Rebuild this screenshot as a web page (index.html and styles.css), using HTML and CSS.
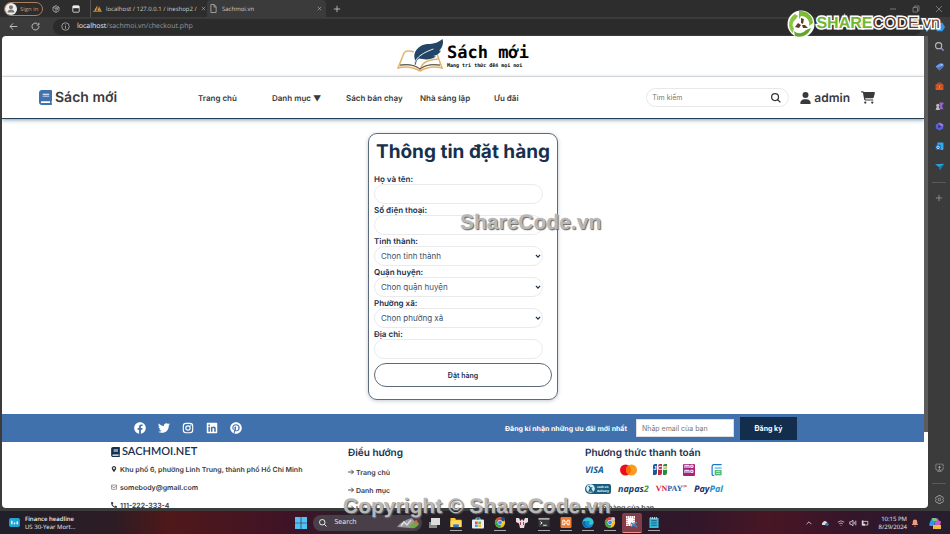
FILE: index.html
```html
<!DOCTYPE html>
<html lang="vi">
<head>
<meta charset="utf-8">
<title>Sachmoi.vn</title>
<link rel="stylesheet" href="styles.css">
</head>
<body>
<svg class="defs" aria-hidden="true">
  <symbol id="book" viewBox="0 0 448 512"><path d="M448 360V24c0-13.3-10.7-24-24-24H96C43 0 0 43 0 96v320c0 53 43 96 96 96h328c13.3 0 24-10.7 24-24v-16c0-7.5-3.5-14.3-8.9-18.7-4.2-15.4-4.2-59.3 0-74.7 5.4-4.3 8.9-11.1 8.9-18.6zM128 134c0-3.300 2.700-6 6-6h212c3.300 0 6 2.700 6 6v20c0 3.300-2.700 6-6 6H134c-3.300 0-6-2.700-6-6v-20zm0 64c0-3.300 2.700-6 6-6h212c3.300 0 6 2.700 6 6v20c0 3.300-2.700 6-6 6H134c-3.300 0-6-2.700-6-6v-20zm253.400 250H96c-17.700 0-32-14.300-32-32 0-17.600 14.400-32 32-32h285.400c-1.900 17.100-1.900 46.900 0 64z"/></symbol>
  <symbol id="arrow" viewBox="0 0 12 12"><path d="M0 6h11M6.500 1.500L11 6l-4.500 4.500" fill="none" stroke="currentColor" stroke-width="1.800"/></symbol>
  <symbol id="chevron" viewBox="0 0 10 10"><path d="M1.500 3l3.500 3.800L8.500 3" fill="none" stroke="currentColor" stroke-width="2"/></symbol>
  <symbol id="cross" viewBox="0 0 10 10"><path d="M1.500 1.500l7 7m0-7l-7 7" fill="none" stroke="currentColor"/></symbol>
  <symbol id="lens" viewBox="0 0 16 16"><path d="M10.500 10.500L15 15M12 6.500a5.500 5.500 0 1 1-11 0a5.500 5.500 0 0 1 11 0z" fill="none" stroke="currentColor" stroke-width="2"/></symbol>
  <symbol id="plus" viewBox="0 0 10 10"><path d="M5 1v8M1 5h8" fill="none" stroke="currentColor"/></symbol>
  <symbol id="chrome" viewBox="0 0 16 16"><circle cx="8" cy="8" r="7.500" fill="#fbc116"/><path d="M8 8L1.500 4.200A7.500 7.500 0 0 1 14.500 4.200z" fill="#ea4335"/><path d="M8 8L1.500 4.200A7.500 7.500 0 0 0 8 15.500l2-4z" fill="#34a853"/><circle cx="8" cy="8" r="3.600" fill="#fff"/><circle cx="8" cy="8" r="2.800" fill="#4285f4"/></symbol>
</svg>

<div class="tabs">
  <button class="signin"><svg viewBox="0 0 12 12"><circle cx="6" cy="6" r="6" fill="#eee"/><circle cx="6" cy="4.300" r="2" fill="#777"/><path d="M2.500 9.500c0-4 7-4 7 0z" fill="#777"/></svg>Sign in</button>
  <svg class="ic8" viewBox="0 0 10 10" fill="none" stroke="#aaa"><path d="M5 .7l3.800 2.100v4.300L5 9.300 1.200 7.100V2.800zM1.200 2.800L5 5l3.800-2.200M5 5v4.300M3 1.800L7 4v2"/></svg>
  <svg class="ic8 square" viewBox="0 0 10 10"><rect x="1" y="1" width="8" height="8" rx="1" fill="none" stroke="#eee"/><path d="M1 1h8v3H1z" fill="#eee"/></svg>
  <div class="tab">
    <svg class="ic9" viewBox="0 0 12 10"><path d="M5.500 1L4.500 8H1.500zM6.300 1v7h2.200zM8.300 2v6h2.700z" fill="#f2a33c"/><path d="M0 9h12" stroke="#8d90b5"/></svg>
    <span>localhost / 127.0.0.1 / ineshop2 /</span><svg class="x"><use href="#cross"/></svg>
  </div>
  <div class="tab active">
    <svg class="ic9" viewBox="0 0 10 12" fill="none" stroke="#bbb"><path d="M1.500.7h4.500l2.500 3v7.600h-7zM5.800.7v3.300h2.700"/></svg>
    <span>Sachmoi.vn</span><svg class="x"><use href="#cross"/></svg>
  </div>
  <svg class="newtab"><use href="#plus"/></svg>
  <div class="winbtns">
    <svg viewBox="0 0 10 10" stroke="#777"><path d="M2 5h6"/></svg>
    <svg viewBox="0 0 10 10" fill="none" stroke="#777"><path d="M2 3.500h4.500V8H2zM3.500 3.500V2H8v4.500H6.500"/></svg>
    <svg viewBox="0 0 10 10" stroke="#777"><path d="M2 2l6 6m0-6L2 8"/></svg>
  </div>
</div>

<div class="toolbar">
  <svg class="ic9" viewBox="0 0 12 12" fill="none" stroke="#ccc" stroke-width="1.200"><path d="M11 6H1.500M5.500 1.800L1.300 6l4.200 4.200"/></svg>
  <svg class="ic9" viewBox="0 0 12 12" fill="none" stroke="#ccc" stroke-width="1.200"><path d="M10.500 5.500A4.600 4.600 0 1 1 8.500 2.200M10.500 1v3H7.500"/></svg>
  <div class="address">
    <svg class="ic9" viewBox="0 0 12 12" fill="none" stroke="#bbb"><circle cx="6" cy="6" r="5"/><path d="M6 5.200v3.600M6 3.200v1.100"/></svg>
    <span><b>localhost</b>/sachmoi.vn/checkout.php</span>
    <span class="reader">A⁾</span>
  </div>
  <svg class="edgepilot" viewBox="0 0 12 12"><path d="M3 1h6l3 5-3 5H2z" fill="#2b9be8"/></svg>
</div>

<div class="middle">
  <div class="page">
    <div class="banner">
      <svg class="bookart" viewBox="0 0 46 34">
        <g fill="none" stroke="#e3b36b"><path d="M17 13C12 11 8 12 7 14L1 29c8-2 15-1 22 3 7-4 14-5 22-3L40 15" stroke-width="1.500"/><path d="M3 27c8-2 15-1 20 4 5-5 12-6 20-4"/><path d="M23 31c2-7 6-10 18-11" stroke-width="1.500"/></g>
        <path d="M3 26c9-1 15 0 20 4 5-4 11-5 20-4" fill="none" stroke="#444"/>
        <path d="M18 21c-3-8 4-15 12-16 7 0 12-2 15.500-5C47 5 45 9 42 12l2-.5c-2 4-5 5-8 5.500l3 .5c-6 4-12 3-17 2-2 1-3 3-3 6h-1.500z" fill="#234566"/>
        <path d="M17.500 25c1-7 10-12 19-15" fill="none" stroke="#fff" stroke-width=".9"/>
      </svg>
      <div class="wordmark"><strong>Sách mới</strong><small>Mang tri thức đến mọi nơi</small></div>
    </div>

    <header class="header">
      <a class="brand" href="#"><svg><use href="#book"/></svg>Sách mới</a>
      <nav class="nav"><a href="#">Trang chủ</a><a href="#">Danh mục ▼</a><a href="#">Sách bán chạy</a><a href="#">Nhà sáng lập</a><a href="#">Ưu đãi</a></nav>
      <form class="search"><input type="text" placeholder="Tìm kiếm" aria-label="Tìm kiếm"><button type="button" aria-label="Tìm kiếm"><svg><use href="#lens"/></svg></button></form>
      <a class="user" href="#"><svg viewBox="0 0 448 512"><path d="M224 256A128 128 0 1 0 224 0a128 128 0 1 0 0 256zm-45.700 48C79.800 304 0 383.800 0 482.300C0 498.700 13.300 512 29.700 512H418.300c16.400 0 29.700-13.300 29.700-29.700C448 383.800 368.200 304 269.700 304H178.300z"/></svg>admin</a>
      <a class="cart" href="#" aria-label="Giỏ hàng"><svg viewBox="0 0 576 512"><path d="M0 24C0 10.700 10.700 0 24 0H69.500c22 0 41.500 12.800 50.600 32h411c26.300 0 45.500 25 38.600 50.400l-41 152.300c-8.500 31.400-37 53.300-69.500 53.300H170.700l5.400 28.500c2.200 11.300 12.100 19.500 23.600 19.500H488c13.300 0 24 10.700 24 24s-10.700 24-24 24H199.700c-34.600 0-64.300-24.600-70.700-58.500L77.400 54.500c-.7-3.800-4-6.500-7.900-6.500H24C10.700 48 0 37.300 0 24zM128 464a48 48 0 1 1 96 0 48 48 0 1 1 -96 0zm336-48a48 48 0 1 1 0 96 48 48 0 1 1 0-96z"/></svg></a>
    </header>

    <main class="main">
      <form class="card">
        <h1>Thông tin đặt hàng</h1>
        <label for="name">Họ và tên:</label>
        <input id="name" type="text">
        <label for="phone">Số điện thoại:</label>
        <input id="phone" type="text">
        <label for="city">Tỉnh thành:</label>
        <div class="pick"><select id="city"><option>Chọn tỉnh thành</option></select><svg><use href="#chevron"/></svg></div>
        <label for="district">Quận huyện:</label>
        <div class="pick"><select id="district"><option>Chọn quận huyện</option></select><svg><use href="#chevron"/></svg></div>
        <label for="ward">Phường xã:</label>
        <div class="pick"><select id="ward"><option>Chọn phường xã</option></select><svg><use href="#chevron"/></svg></div>
        <label for="street">Địa chỉ:</label>
        <input id="street" type="text">
        <button type="button">Đặt hàng</button>
      </form>
    </main>

    <footer>
      <div class="strip">
        <div class="social">
          <svg viewBox="0 0 512 512"><path d="M504 256C504 119 393 8 256 8S8 119 8 256c0 123.780 90.690 226.380 209.250 245V327.690h-63V256h63v-54.640c0-62.150 37-96.480 93.670-96.480 27.140 0 55.520 4.840 55.520 4.840v61h-31.280c-30.800 0-40.410 19.120-40.410 38.730V256h68.780l-11 71.690h-57.780V501C413.310 482.380 504 379.780 504 256z"/></svg>
          <svg viewBox="0 0 512 512"><path d="M459.370 151.716c.325 4.548.325 9.097.325 13.645 0 138.720-105.583 298.558-298.558 298.558-59.452 0-114.680-17.219-161.137-47.106 8.447.974 16.568 1.299 25.340 1.299 49.055 0 94.213-16.568 130.274-44.832-46.132-.975-84.792-31.188-98.112-72.772 6.498.974 12.995 1.624 19.818 1.624 9.421 0 18.843-1.300 27.614-3.573-48.081-9.747-84.143-51.980-84.143-102.985v-1.299c13.969 7.797 30.214 12.670 47.431 13.319-28.264-18.843-46.781-51.005-46.781-87.391 0-19.492 5.197-37.360 14.294-52.954 51.655 63.675 129.300 105.258 216.365 109.807-1.624-7.797-2.599-15.918-2.599-24.040 0-57.828 46.782-104.934 104.934-104.934 30.213 0 57.502 12.670 76.670 33.137 23.715-4.548 46.456-13.320 66.599-25.340-7.798 24.366-24.366 44.833-46.132 57.827 21.117-2.273 41.584-8.122 60.426-16.243-14.292 20.791-32.161 39.308-52.628 54.253z"/></svg>
          <svg viewBox="0 0 16 16"><g fill="none" stroke="#fff" stroke-width="1.500"><rect x="1.750" y="1.750" width="12.500" height="12.500" rx="3.500"/><circle cx="8" cy="8" r="2.900"/></g><circle cx="11.700" cy="4.300" r=".9"/></svg>
          <svg viewBox="-32 0 512 512"><path d="M416 32H31.900C14.300 32 0 46.500 0 64.300v383.400C0 465.500 14.300 480 31.900 480H416c17.600 0 32-14.500 32-32.300V64.300c0-17.800-14.400-32.300-32-32.300zM135.400 416H69V202.200h66.500V416zm-33.200-243c-21.300 0-38.500-17.300-38.500-38.500S80.900 96 102.200 96c21.200 0 38.500 17.300 38.500 38.500 0 21.300-17.200 38.500-38.500 38.500zm282.100 243h-66.400V312c0-24.800-.5-56.700-34.500-56.700-34.600 0-39.900 27-39.900 54.900V416h-66.400V202.200h63.700v29.200h.9c8.900-16.800 30.600-34.500 62.900-34.500 67.200 0 79.700 44.300 79.700 101.900V416z"/></svg>
          <svg viewBox="-8 0 512 512"><path d="M496 256c0 137-111 248-248 248-25.600 0-50.200-3.900-73.400-11.100 10.100-16.500 25.200-43.500 30.800-65 3-11.600 15.400-59 15.400-59 8.100 15.400 31.700 28.500 56.800 28.500 74.800 0 128.700-68.800 128.700-154.300 0-81.900-66.900-143.200-152.900-143.200-107 0-163.900 71.800-163.900 150.100 0 36.400 19.400 81.700 50.300 96.100 4.700 2.200 7.200 1.200 8.300-3.300.8-3.400 5-20.300 6.900-28.100.6-2.500.3-4.700-1.700-7.100-10.100-12.500-18.300-35.300-18.300-56.600 0-54.700 41.400-107.600 112-107.600 60.900 0 103.600 41.500 103.600 100.900 0 67.100-33.900 113.600-78 113.600-24.300 0-42.600-20.100-36.700-44.800 7-29.500 20.500-61.300 20.500-82.600 0-19-10.200-34.900-31.400-34.900-24.900 0-44.900 25.700-44.900 60.200 0 22 7.400 36.800 7.400 36.800s-24.500 103.800-29 123.200c-5 21.400-3 51.600-.9 71.200C65.400 450.900 0 361.100 0 256 0 119 111 8 248 8s248 111 248 248z"/></svg>
        </div>
        <form class="subscribe">
          <label for="email">Đăng kí nhận những ưu đãi mới nhất</label>
          <input id="email" type="email" placeholder="Nhập email của bạn">
          <button type="button">Đăng ký</button>
        </form>
      </div>
      <div class="columns">
        <section>
          <h2 class="site"><svg><use href="#book"/></svg>SACHMOI.NET</h2>
          <ul>
            <li><svg viewBox="-64 0 512 512"><path d="M172.268 501.670C26.970 291.031 0 269.413 0 192 0 85.961 85.961 0 192 0s192 85.961 192 192c0 77.413-26.970 99.031-172.268 309.670-9.535 13.774-29.930 13.773-39.464 0zM192 272c44.183 0 80-35.817 80-80s-35.817-80-80-80-80 35.817-80 80 35.817 80 80 80z"/></svg>Khu phố 6, phường Linh Trung, thành phố Hồ Chí Minh</li>
            <li><svg viewBox="0 0 12 12" fill="none" stroke="#333"><rect x=".8" y="2" width="10.400" height="8.500" rx="1"/><path d="M1 4l5 3.500L11 4"/></svg>somebody@gmail.com</li>
            <li><svg viewBox="0 0 512 512"><path transform="translate(512 0) scale(-1 1)" d="M493.400 24.600l-104-24c-11.300-2.600-22.900 3.300-27.500 13.900l-48 112c-4.200 9.800-1.400 21.300 6.900 28l60.600 49.600c-36 76.700-98.900 140.500-177.200 177.200l-49.600-60.600c-6.800-8.300-18.200-11.100-28-6.900l-112 48C3.900 366.500-2 378.100.6 389.400l24 104C27.100 504.200 36.700 512 48 512c256.100 0 464-207.500 464-464 0-11.200-7.700-20.900-18.600-23.400z"/></svg>111-222-333-4</li>
          </ul>
        </section>
        <section>
          <h2>Điều hướng</h2>
          <ul class="links">
            <li><svg><use href="#arrow"/></svg><a href="#">Trang chủ</a></li>
            <li><svg><use href="#arrow"/></svg><a href="#">Danh mục</a></li>
            <li><svg><use href="#arrow"/></svg><a href="#">Ưu đãi</a></li>
          </ul>
        </section>
        <section>
          <h2>Phương thức thanh toán</h2>
          <div class="pays">
            <span class="visa">VISA</span>
            <svg class="mc" viewBox="0 0 17 12"><circle cx="5.500" cy="6" r="5.500" fill="#e8101c"/><circle cx="11.500" cy="6" r="5.500" fill="#f79e1b"/><path d="M8.500 1.400a5.500 5.500 0 0 1 0 9.200a5.500 5.500 0 0 1 0-9.200z" fill="#ff6a0e"/></svg>
            <span class="jcb"><i>J</i><i>C</i><i>B</i></span>
            <span class="momo">mo<br>mo</span>
            <svg class="zalo" viewBox="0 0 12 13"><path d="M3 12.500H2A1.500 1.500 0 0 1 .7 11V2.500A2 2 0 0 1 2.700.7H11" fill="none" stroke="#1478cf" stroke-width="1.300"/><path d="M3.500 3.500H11v1.800H3.500z" fill="#7cc3e8"/><path d="M3.500 6.500H11v5.800H3.500z" fill="#51b878"/><path d="M5 8h4.500M5 10.200h4.500" stroke="#c8f0c8"/></svg>
          </div>
          <div class="pays">
            <span class="cod"><svg viewBox="0 0 10 10"><circle cx="5" cy="5" r="4.800" fill="#d5eef5"/><path d="M3 2l2 2.500L3.500 8H7L5 5l2-1" fill="none" stroke="#135d7e" stroke-width="1.300"/></svg><b>cash on<br>delivery</b></span>
            <span class="napas">napas<i>2</i></span>
            <span class="vnpay"><i>VN</i>PAY<sup>QR</sup></span>
            <span class="paypal">Pay<i>Pal</i></span>
          </div>
          <ul class="links"><li><svg><use href="#arrow"/></svg><a href="#">Đơn hàng của bạn</a></li></ul>
        </section>
      </div>
    </footer>
  </div>
  <div class="scroll"><div class="thumb"></div></div>
  <aside class="side">
    <svg viewBox="0 0 16 16"><g color="#bbb"><use href="#lens"/></g><path d="M11 11l4 4" stroke="#a070d8" stroke-width="2.500"/></svg>
    <svg viewBox="0 0 16 16"><path d="M1 8l8-6 6 1 0 5-7 7z" fill="#6c9cea"/><path d="M3 10l5 5 7-7v-2z" fill="#4c72c4"/><circle cx="12" cy="5" r="1" fill="#fff"/></svg>
    <svg viewBox="0 0 16 16"><path d="M5 4V2h6v2" fill="none" stroke="#e06030" stroke-width="1.500"/><rect x="1" y="4" width="14" height="10" rx="1.500" fill="#df5b25"/><path d="M1 8.500h14" stroke="#8b3010"/><path d="M7 7.500h2v2H7z" fill="#ffc090"/></svg>
    <svg viewBox="0 0 16 16"><circle cx="5" cy="6" r="3" fill="#bbb"/><path d="M1 14l2-5h4l2 5z" fill="#bbb"/><path d="M8 1h7v3l-2 1v4l2 4H9V5L8 4z" fill="#9a65d0"/></svg>
    <svg viewBox="0 0 16 16"><path d="M8 1l6.500 3.500v7L8 15l-6.500-3.500v-7z" fill="#5b60d8"/><path d="M8 1l6.500 3.500v4L8 5z" fill="#a078e8"/><path d="M6 5l5 3-5 3z" fill="#302f61"/></svg>
    <svg viewBox="0 0 16 16"><rect x="4" y="1" width="11" height="13" rx="1.500" fill="#33a9e8"/><rect x="1" y="5" width="9" height="9" rx="1" fill="#0c66b8"/><circle cx="5.500" cy="9.500" r="2.200" fill="none" stroke="#fff" stroke-width="1.500"/></svg>
    <svg viewBox="0 0 16 16"><path d="M0 4l16-1-7 11-2-5z" fill="#27a5df"/><path d="M7 9l9-6-7 11z" fill="#1476ad"/></svg>
    <hr>
    <svg class="muted"><use href="#plus"/></svg>
    <span class="push"></span>
    <svg viewBox="0 0 16 16" fill="none" stroke="#aaa" stroke-width="1.500"><path d="M4 12H1.500V2h13v10H12" stroke-dasharray="2 1"/><path d="M8 5v5M5.500 7.500h5M4.500 14.500L8 11l3.500 3.500z"/></svg>
    <hr>
    <svg viewBox="0 0 16 16" fill="none" stroke="#aaa" stroke-width="1.500"><path d="M6 1h4l1 2.200 2.500 0 1.800 3.300L13.800 8l1.500 2-1.800 3.200-2.500-.2L10 15H6l-1-2-2.500.2L.7 10l1.500-2L.7 6l1.800-3 2.500.2z"/><circle cx="8" cy="8" r="2.300"/></svg>
  </aside>
</div>

<div class="taskbar">
  <div class="news"><svg viewBox="0 0 12 10"><rect width="12" height="10" rx="2" fill="#22a6d4"/><path d="M3 3v4M6 5v2M9 4v3" stroke="#fff" stroke-width="1.500"/></svg><p><b>Finance headline</b><br>US 30-Year Mort...</p></div>
  <div class="apps">
    <svg viewBox="0 0 12 12" fill="#4fc3f7"><path d="M0 0h5.700v5.700H0zM6.300 0H12v5.700H6.300zM0 6.300h5.700V12H0zM6.300 6.300H12V12H6.300z"/></svg>
    <div class="find"><svg class="ic9"><use href="#lens"/></svg><span>Search</span><svg class="dish" viewBox="0 0 24 12"><path d="M1 10c4-5 8-7 15-9l3 4-4 6z" fill="#9a9aa0"/><path d="M5 9l3-4 3 3 4-5" fill="none" stroke="#ddd" stroke-width="1.500"/><path d="M14 8c3-3 6-3 9-2-1 4-5 6-9 5z" fill="#6cab45"/><circle cx="20" cy="5" r="1.800" fill="#e0663d"/></svg></div>
    <svg viewBox="0 0 12 12"><rect y="5" x="1" width="8" height="6" fill="#888"/><rect x="3" y="1" width="9" height="7" fill="#ddd"/></svg>
    <svg class="open" viewBox="0 0 12 12"><path d="M0 1h5l1 2h6v8H0z" fill="#fcc738"/><path d="M0 4h12v7H0z" fill="#ffda63"/><path d="M3 8h6v3H3z" fill="#3577c4"/></svg>
    <svg viewBox="0 0 12 12"><path d="M4 3V1h4v2" fill="none" stroke="#70c5ec"/><rect y="2.500" width="12" height="9" rx="1" fill="#e8eef2"/><path d="M3 4.500h2.700v2.500H3z" fill="#ef5332"/><path d="M6.300 4.500H9v2.500H6.300z" fill="#7eb93e"/><path d="M3 7.500h2.700V10H3z" fill="#34a6e6"/><path d="M6.300 7.500H9V10H6.300z" fill="#f5b82c"/></svg>
    <svg class="open" viewBox="0 0 16 16"><use href="#chrome"/><circle cx="12.500" cy="3" r="3" fill="#1c4d80"/></svg>
    <svg viewBox="0 0 12 12"><path d="M0 1h3l1.500 3L6 2l1.500 2L9 1h3v4L9 6.500 8 11H4L3 6.500 0 5z" fill="#eadbe0"/><path d="M4 5h1v3H4zM7 5h1v3H7z" fill="#b03c68"/></svg>
    <svg class="open" viewBox="0 0 12 12"><rect y="1" width="12" height="10" rx="1" fill="#383838"/><path d="M0 1h12v2H0z" fill="#aaa"/><path d="M2 5l2 1.500L2 8M5 9h4" fill="none" stroke="#fff"/></svg>
    <svg class="open" viewBox="0 0 12 12"><rect width="12" height="12" rx="1.500" fill="#f07c2e"/><path d="M2.500 3.500h2v1.800h3V3.500h2v5h-2V6.700h-3v1.800h-2z" fill="none" stroke="#fff"/></svg>
    <svg class="open" viewBox="0 0 12 12"><circle cx="6" cy="6" r="6" fill="#1687d0"/><path d="M0 6C0 0 12-1 12 6c0 3-5 3-5 1 2-2-1-4-3-2-2 3 1 6 4 7C3 13 0 10 0 6z" fill="#38c5ca"/><path d="M4 5c-2 3 1 6.500 5 6.200C4 14-1 9 0 5c1-1 3-1 4 0z" fill="#1068b4"/></svg>
    <svg class="open" viewBox="0 0 16 16"><use href="#chrome"/><circle cx="12.500" cy="3" r="3" fill="#ccc"/></svg>
    <span class="current"><svg viewBox="0 0 12 12"><rect width="9" height="10" fill="#fff"/><path d="M1 1h7v8H1z" fill="none" stroke="#c84848" stroke-dasharray="1 1"/><path d="M5 7l6 4m-6 0l6-5" stroke="#3e84be" stroke-width="1.600"/></svg></span>
    <svg class="open" viewBox="0 0 12 12"><path d="M1 1h10v11H1z" fill="#35b9d7"/><path d="M3 4h6M3 6.500h6M3 9h6" stroke="#145a7c"/><path d="M2 1h8" stroke="#d7eef5" stroke-dasharray="1 1" stroke-width="2"/></svg>
  </div>
  <div class="tray">
    <svg viewBox="0 0 10 10" fill="none" stroke="#ddd"><path d="M2 6.500l3-3 3 3"/></svg>
    <svg class="cloud" viewBox="0 0 12 10"><path d="M2 8a2.500 2.500 0 0 1 1-4 3.500 3.500 0 0 1 6.500 1A2 2 0 0 1 10 8z" fill="#ddd"/><circle cx="9" cy="7" r="2.500" fill="#3577bd"/></svg>
    <svg viewBox="0 0 10 10" fill="none" stroke="#ccc"><path d="M1 4q4-3.500 8 0M2.700 6q2.300-2 4.600 0M5 8.500v-1"/></svg>
    <svg viewBox="0 0 10 10" fill="none" stroke="#ddd"><path d="M1 3.500h1.500L5 1.500v7L2.500 6.500H1zM6.500 3.500v3M8.500 2v6"/></svg>
    <svg viewBox="0 0 10 10" fill="none" stroke="#ddd"><path d="M2 3h6.500v4.500H2z"/><path d="M2 2v5h3" stroke-width="2"/></svg>
    <p>10:15 PM<br>8/29/2024</p>
    <svg viewBox="0 0 10 10"><path d="M1 7.500l1.200-2V3.500a2.800 2.800 0 0 1 5.600 0v2l1.200 2zM4 8.500h2v1H4z" fill="#f29b80"/></svg>
    <svg class="copilot" viewBox="0 0 12 12"><path d="M3 1h4L5 9H1C0 9 0 7 1 5z" fill="#3294e4"/><path d="M7 1c3 0 2 3 4 3 2 0 0 6-2 6H5z" fill="#c85bc8"/><path d="M3 1h4l1 3H4z" fill="#6fcf72"/><path d="M4 8h8v4H4z" fill="#f0b93c"/></svg>
  </div>
</div>

<div class="stamp"><svg viewBox="0 0 28 28"><circle cx="14" cy="14" r="13.500" fill="#fff"/><path d="M12 1c8-1 14 5 14 12l-4 3a8 8 0 0 0-8-10l-2 3z" fill="#7cbb35"/><path d="M24 18c-3 8-10 10-16 8l-1-5a8 8 0 0 0 12-1z" fill="#62a62c"/><path d="M6 23C0 18 1 8 8 4l3 2-2 3c-4 3-4 7-2 9z" fill="#8ac543"/><path d="M14 8l3 1-1 5-2-1zM8 17l3-4 3 2-2 3zM15 15l3 0 3 3h-5z" fill="#633c23"/></svg><span><b>SHARE</b>CODE<strong>.vn</strong></span></div>
<div class="mark center">ShareCode.vn</div>
<div class="mark bottom">Copyright © ShareCode.vn</div>
</body>
</html>
```
FILE: styles.css
```css
* { box-sizing: border-box; }
body {
  margin: 0;
  height: 100vh;
  overflow: hidden;
  position: relative;
  display: flex;
  flex-direction: column;
  background: #3b3b3b;
  color: #3a3a3d;
  font-family: Inter, "Noto Sans", sans-serif;
  font-size: 8px;
  text-rendering: geometricPrecision;
}
svg { display: block; flex: none; }
svg:not([fill]) { fill: currentColor; }
a { color: inherit; text-decoration: none; }
h1, h2, p, ul { margin: 0; padding: 0; }
ul { list-style: none; }
button, input, select { font-family: inherit; margin: 0; }
.defs { position: absolute; width: 0; height: 0; }
.ic8 { width: 8px; height: 8px; }
.ic9 { width: 9px; height: 9px; }

/* browser chrome */
.tabs {
  height: 17px;
  display: flex;
  align-items: center;
  background: #2d2d2d;
  color: #ccc;
  font: 6px "Open Sans", sans-serif;
  padding-left: 4px;
}
.signin {
  width: 39px;
  height: 14px;
  display: flex;
  align-items: center;
  gap: 3px;
  padding: 0;
  border: 1px solid #a87f62;
  border-radius: 7px;
  background: none;
  color: #c99878;
  font: 6px "Open Sans", sans-serif;
}
.signin svg { width: 12px; height: 12px; }
.tabs > .ic8 { margin-left: 9px; }
.tabs > .square { margin-left: 12px; }
.tab {
  height: 17px;
  display: flex;
  align-items: center;
  gap: 4px;
  width: 117px;
  padding: 0 4px 0 2px;
  margin-left: 10px;
  border-left: 1px solid #555;
}
.tab span { flex: 1; white-space: nowrap; }
.tab .x { width: 5px; height: 5px; }
.tab.active {
  width: 119px;
  margin: 0;
  border: 0;
  border-radius: 4px 4px 0 0;
  background: #3b3b3b;
}
.newtab { width: 8px; height: 8px; margin-left: 7px; }
.winbtns { display: flex; gap: 13px; margin-left: auto; padding-right: 6px; }
.winbtns svg { width: 10px; height: 10px; }
.toolbar {
  height: 19px;
  display: flex;
  align-items: center;
  gap: 13px;
  padding: 0 5px 0 9px;
}
.edgepilot { width: 10px; height: 12px; }
.address {
  flex: 1;
  height: 16px;
  display: flex;
  align-items: center;
  gap: 7px;
  padding: 0 128px 0 8px;
  border-radius: 8px;
  background: #2b2b2b;
  color: #999;
  font: 7px "Open Sans", sans-serif;
}
.address b { color: #eee; font-weight: 500; }
.reader { margin-left: auto; }

/* page viewport */
.middle { flex: 1; min-height: 0; display: flex; padding: 0 0 3px 2px; }
.page {
  flex: 1;
  overflow: hidden;
  background: #fff;
  border-radius: 4px 0 0 4px;
}
.scroll { width: 4px; background: #fff; border-radius: 0 0 4px 0; }
.thumb { height: 84%; background: #5c5c5c; }
.side {
  width: 22px;
  display: flex;
  flex-direction: column;
  align-items: center;
  gap: 11px;
  padding: 6px 0 4px;
}
.side svg { width: 9px; height: 9px; }
.side .muted { color: #999; width: 8px; height: 8px; }
.side hr { width: 14px; margin: 0; border: 0; border-top: 1px solid #5a5a5a; }
.push { flex: 1; }

.banner {
  height: 41px;
  display: flex;
  align-items: center;
  justify-content: center;
  gap: 4px;
  border-bottom: 1px solid #e8e8e8;
}
.bookart { width: 46px; height: 34px; }
.wordmark { color: #000; font-family: "DejaVu Sans Mono", monospace; }
.wordmark strong, .wordmark small { display: block; }
.wordmark strong { font-size: 17px; line-height: 20px; }
.wordmark small { font-size: 5px; line-height: 6px; font-weight: bold; }

.header {
  height: 42px;
  display: flex;
  align-items: center;
  padding: 0 49px 0 37px;
  border-bottom: 1px solid #24415c;
  box-shadow: 0 1px 4px #8a98a6;
}
.brand, .user { display: flex; align-items: center; font-weight: 600; }
.brand { width: 159px; gap: 3px; font-size: 14px; }
.brand svg { width: 13px; height: 15px; color: #4272ae; }
.nav { display: grid; grid-template-columns: repeat(5, 74px); font-weight: 600; white-space: nowrap; }
.search {
  width: 143px;
  height: 19px;
  display: flex;
  align-items: center;
  margin-left: auto;
  padding: 0 7px 0 5px;
  border: 1px solid #e8e8e8;
  border-radius: 10px;
}
.search input { flex: 1; min-width: 0; padding: 0; border: 0; outline: 0; background: none; font-size: 7px; }
.search button { padding: 0; border: 0; background: none; color: #333; }
.search svg { width: 10px; height: 10px; }
::placeholder { color: #777; opacity: 1; }
.user { margin-left: 11px; gap: 3px; font-size: 12px; }
.user svg { width: 11px; height: 12px; }
.cart { margin-left: 11px; }
.cart svg { width: 14px; height: 13px; }

/* order form */
.main { display: flex; justify-content: center; padding: 14px 0; }
.card {
  width: 190px;
  padding: 5px 5px 12px;
  border: 1px solid #5b6b7c;
  border-radius: 9px;
  box-shadow: 0 1px 4px #c4cbd2;
  color: #17304e;
}
.card h1 { font-size: 19px; line-height: 26px; margin-bottom: 8px; text-align: center; white-space: nowrap; }
.card label { display: block; height: 11px; line-height: 13px; font-weight: 600; }
.card input, .card select {
  display: block;
  width: 100%;
  height: 20px;
  padding: 0 6px;
  border: 1px solid #e8eaec;
  border-radius: 10px;
  background: none;
  outline: 0;
  color: #3c4f66;
  font-size: 8px;
  appearance: none;
}
.card input, .pick { width: 169px; }
.pick { position: relative; }
.pick svg { position: absolute; right: 2px; top: 7px; width: 6px; height: 6px; }
.card button {
  width: 100%;
  height: 24px;
  margin-top: 4px;
  border: 1px solid #5b6b7c;
  border-radius: 12px;
  background: #fff;
  color: #17304e;
  font-size: 7px;
  font-weight: 600;
}

/* footer */
.strip {
  height: 28px;
  display: flex;
  align-items: center;
  justify-content: space-between;
  padding: 0 127px 0 132px;
  background: #4171ad;
  color: #fff;
}
.social { display: flex; gap: 12px; }
.social svg { width: 12px; height: 12px; }
.subscribe { display: flex; align-items: center; font-size: 7px; font-weight: 700; }
.subscribe input { width: 98px; height: 18px; margin: 0 6px 0 9px; padding: 0 5px; border: 1px solid #ddd; background: #fff; font-size: 7px; }
.subscribe button { width: 57px; height: 23px; padding: 0; border: 0; background: #132d4d; color: #fff; font-size: 7px; font-weight: 700; }
.columns {
  display: grid;
  grid-template-columns: repeat(3, 1fr);
  padding: 4px 102px 0 109px;
  font-size: 7px;
  font-weight: 600;
}
.columns h2 { color: #17304e; font-size: 10px; line-height: 14px; font-weight: 600; }
.columns .site { display: flex; align-items: center; gap: 2px; line-height: 12px; margin-bottom: 2px; font-family: Lato, sans-serif; font-size: 11px; }
.site svg { width: 9px; height: 10px; }
.columns li { height: 18px; display: flex; align-items: center; gap: 3px; white-space: nowrap; }
.columns li svg { width: 6px; height: 6px; }
.columns .links { padding-top: 3px; }
.links li { gap: 2px; }
.pays { width: 138px; height: 19px; display: flex; align-items: center; justify-content: space-between; }
.pays + .links { margin-top: -3px; }
.pays i { font-style: inherit; }
.visa { color: #155a94; font: italic bold 9px "Open Sans", sans-serif; }
.mc { width: 17px; height: 12px; }
.jcb { display: flex; gap: 1px; color: #fff; font: bold 6px/11px "Liberation Sans", sans-serif; }
.jcb i { width: 4px; text-align: center; border-radius: 2px 0; background: #175b9d; }
.jcb i:nth-child(2) { background: #c5283e; }
.jcb i:nth-child(3) { background: #288b43; }
.momo { width: 12px; height: 12px; border-radius: 1px; background: #ae2070; color: #fff; font: bold 6px/5px "Open Sans", sans-serif; text-align: center; }
.zalo { width: 12px; height: 12px; }
.cod { width: 26px; height: 10px; display: flex; align-items: center; gap: 2px; padding: 0 1px; border-radius: 5px 2px 2px 5px; background: #165e7e; color: #fff; font: 3px/4px "Open Sans", sans-serif; }
.cod svg { width: 9px; height: 9px; }
.napas { color: #143f69; font: italic bold 9px "Open Sans", sans-serif; }
.napas i { color: #389849; }
.vnpay { color: #1c5fa8; font: bold 8px "Liberation Serif", serif; }
.vnpay i { color: #d72735; }
.vnpay sup { color: #d72735; font-size: 3px; }
.paypal { color: #213170; font: italic bold 9px "Open Sans", sans-serif; }
.paypal i { color: #2790c8; }

/* taskbar */
.taskbar {
  height: 23px;
  position: relative;
  display: flex;
  align-items: center;
  justify-content: space-between;
  padding: 0 9px;
  background: linear-gradient(90deg, #201f2a 0, #2d1c24 12%, #501819 18%, #3e1327 31%, #28222b 38%, #241d26 60%, #32162a 73%, #481624 81%, #35152a 90%, #251e2e);
  color: #eee;
  font: 6px/8px "Open Sans", sans-serif;
}
.news { display: flex; align-items: center; gap: 5px; }
.news svg { width: 11px; height: 9px; }
.news b { font-weight: 600; }
.apps { position: absolute; left: 31%; display: flex; align-items: center; gap: 10px; }
.apps svg { width: 12px; height: 12px; }
.apps .open { height: 16px; padding: 2px 0; border-bottom: 1px solid #aaa; }
.find { width: 109px; height: 16px; display: flex; align-items: center; gap: 8px; margin: 0 -4px; padding: 0 2px 0 6px; border-radius: 8px; background: #493f48; font-size: 7px; }
.find .ic9 { width: 8px; height: 8px; }
.find .dish { width: 24px; height: 12px; margin-left: auto; }
.current { width: 20px; height: 20px; display: grid; place-items: center; margin: 0 -4px; border-radius: 2px; background: #813d48; border-bottom: 1px solid #f59292; }
.tray { display: flex; align-items: center; gap: 4px; text-align: right; }
.tray svg { width: 8px; height: 8px; }
.tray .cloud { margin: 0 4px; }
.tray p { margin: 0 0 0 6px; }
.tray .copilot { width: 12px; height: 12px; margin-left: 6px; }

/* overlays */
.stamp { position: absolute; right: 10px; top: 10px; display: flex; align-items: center; gap: 1px; }
.stamp svg { width: 28px; height: 28px; }
.stamp span { color: #674028; font: 16px/28px "Liberation Sans", sans-serif; -webkit-text-stroke: 3px #fff; paint-order: stroke fill; }
.stamp b { color: #74b531; }
.stamp strong { font-weight: normal; }
.mark { position: absolute; color: #b8b8b8; font: bold 21px/24px "Liberation Sans", sans-serif; text-shadow: 1px 1px 1px #666; white-space: nowrap; pointer-events: none; }
.center { left: 460px; top: 211px; }
.bottom { left: 343px; bottom: 15px; }
```
